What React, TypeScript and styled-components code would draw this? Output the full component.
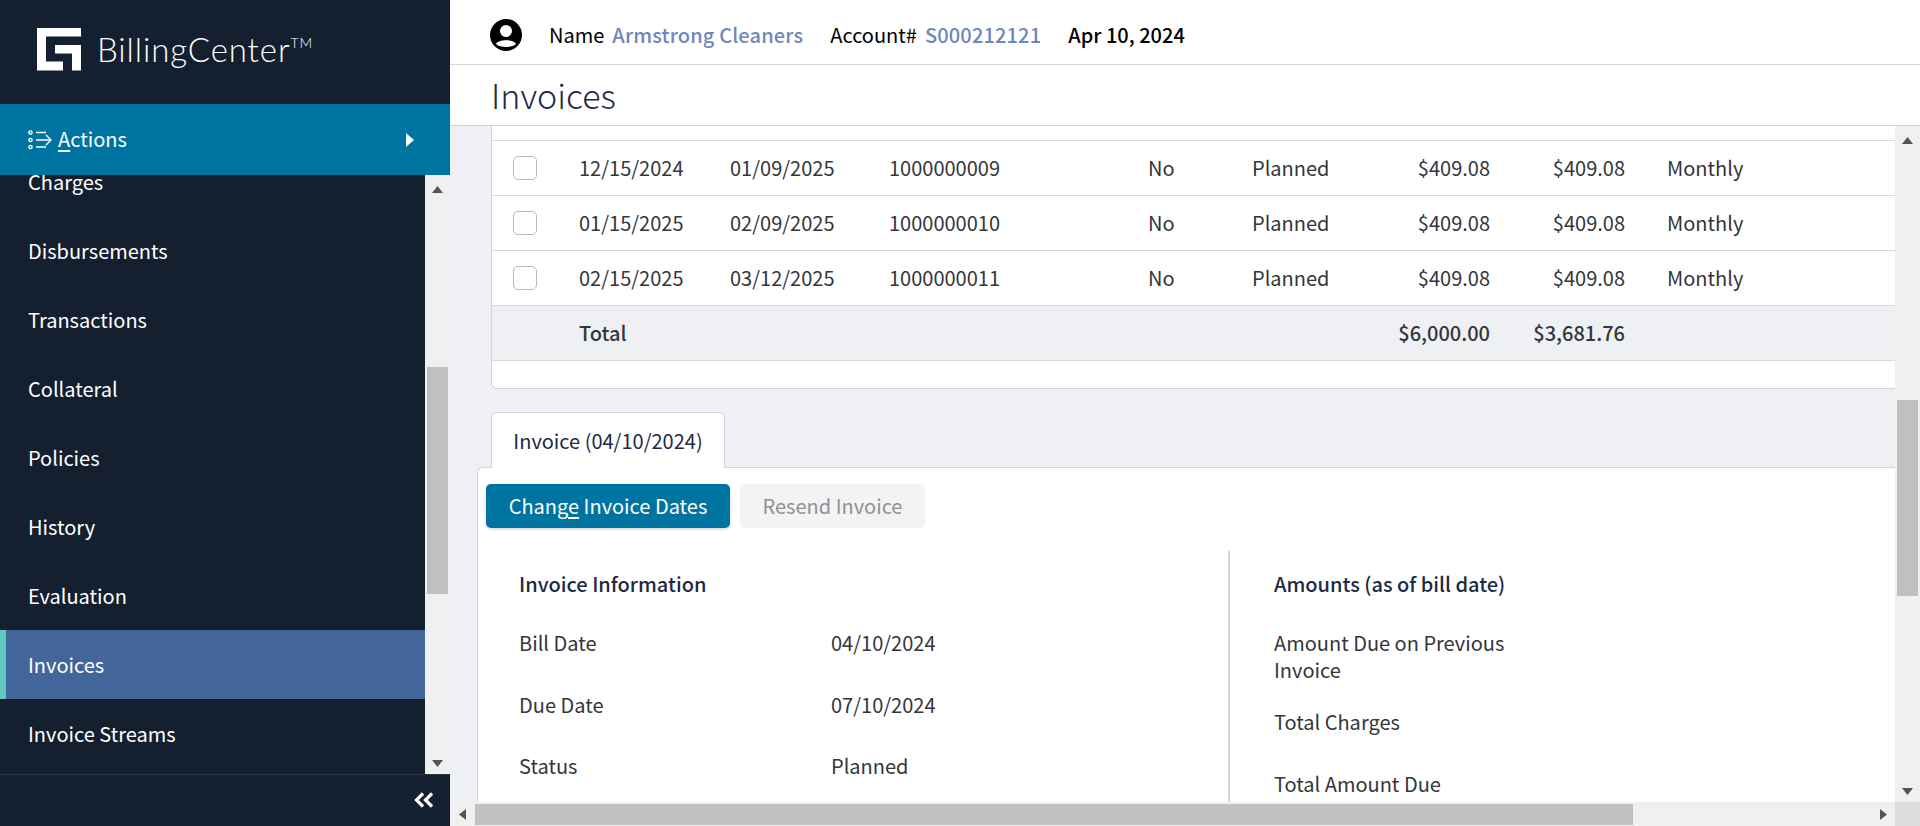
import React from "react";
import styled, { createGlobalStyle } from "styled-components";

const Global = createGlobalStyle`
  html, body { margin: 0; padding: 0; height: 100%; overflow: hidden; }
  body { font-family: "Noto Sans CJK SC", "Noto Sans", sans-serif; font-size: 20px; color: #33363b; background: #eff0f4; }
  #root { height: 826px; }
`;

const Shell = styled.div`display: flex; width: 1920px; height: 826px; overflow: hidden;`;
const Sidebar = styled.aside`width: 450px; height: 826px; flex: none; display: flex; flex-direction: column; background: #141f2f;`;
const Brand = styled.div`height: 104px; flex: none; display: flex; align-items: flex-start; padding: 28px 0 0 37px; box-sizing: border-box; gap: 16px; color: #fff;`;
const BrandName = styled.span`font-family: "Lato", sans-serif; font-weight: 300; font-size: 33px; line-height: 40px; letter-spacing: 0.9px; margin-top: 1px; sup { font-size: 14px; line-height: 0; vertical-align: 14px; }`;
const ActionsBar = styled.div`height: 71px; flex: none; box-sizing: border-box; background: #0074a1; color: #fff; display: flex; align-items: center; padding: 0 36px 0 28px; z-index: 1;`;
const ActionsLabel = styled.span`margin-left: 6px; flex: 1; line-height: 30px; padding-bottom: 2px; u { text-underline-offset: 3px; text-decoration-thickness: 2px; }`;
const NavWrap = styled.div`flex: 1; display: flex; min-height: 0; overflow: hidden;`;
const NavList = styled.div`flex: 1; margin-top: -28px;`;
const NavItem = styled.div<{ $active?: boolean }>`
  height: 69px; display: flex; align-items: center; box-sizing: border-box;
  padding-left: ${p => (p.$active ? 22 : 28)}px; padding-bottom: 1px; color: #fff;
  background: ${p => (p.$active ? "#42659a" : "transparent")};
  border-left: ${p => (p.$active ? "6px solid #5fc9c1" : "none")};
`;
const SideTrack = styled.div`width: 25px; flex: none; background: #f0f0f0; display: flex; flex-direction: column; align-items: center; position: relative;`;
const SideThumb = styled.div`width: 21px; height: 227px; background: #c0c0c0; margin-top: 192px;`;
const ArrowSlot = styled.div<{ $bottom?: boolean }>`position: absolute; left: 7px; ${p => (p.$bottom ? "bottom: 7px" : "top: 10px")}; line-height: 0;`;
const SideFooter = styled.div`height: 52px; flex: none; box-sizing: border-box; border-top: 1px solid #2c3646; display: flex; align-items: center; justify-content: flex-end; padding: 0 16px 2px 0; color: #fff;`;

const Main = styled.main`flex: 1; min-width: 0; display: flex; flex-direction: column;`;
const TopBar = styled.header`height: 65px; flex: none; box-sizing: border-box; background: #fff; border-bottom: 1px solid #d4d4d4; display: flex; align-items: center; padding: 5px 0 0 40px; color: #000;`;
const Avatar = styled.span`width: 32px; height: 32px; display: flex; margin-right: 27px;`;
const MetaLabel = styled.span`margin-right: 8px;`;
const MetaValue = styled.span`color: #6d87bb; font-weight: 500; margin-right: 27px; letter-spacing: 0.15px;`;
const DateText = styled.span`font-weight: 500;`;
const TitleBar = styled.div`height: 61px; flex: none; box-sizing: border-box; background: #fff; border-bottom: 1px solid #d4d4d4; padding-left: 41px; display: flex; align-items: center;`;
const Title = styled.h1`margin: 0; font-size: 34px; font-weight: 300; color: #1d2a44; line-height: 44px;`;
const Body = styled.div`flex: 1; min-height: 0; display: flex;`;
const Content = styled.div`flex: 1; min-width: 0; overflow: hidden; padding-left: 27px; display: flex; flex-direction: column;`;

const TableCard = styled.section`margin-left: 14px; flex: none; height: 263px; box-sizing: border-box; background: #fff; border: 1px solid #d4d5d9; border-top: none; border-right: none; border-radius: 0 0 0 6px; padding-top: 14px;`;
const Row = styled.div<{ $total?: boolean }>`
  height: 55px; box-sizing: border-box; display: grid;
  grid-template-columns: 87px 151px 159px 259px 104px 100px 138px 135px 42px 1fr;
  align-items: center; border-top: 1px solid #d8d9dd;
  background: ${p => (p.$total ? "#eff0f4" : "#fff")};
  font-weight: ${p => (p.$total ? 500 : 400)};
  ${p => p.$total && "border-bottom: 1px solid #d8d9dd; height: 56px;"}
`;
const CheckCell = styled.div`padding-left: 21px;`;
const Check = styled.span`display: block; width: 24px; height: 24px; box-sizing: border-box; border: 1px solid #b8b9bd; border-radius: 5px; background: #fff;`;
const Cell = styled.div<{ $right?: boolean }>`text-align: ${p => (p.$right ? "right" : "left")}; line-height: 30px; white-space: nowrap;`;

const Tab = styled.div`margin: 23px 0 0 14px; width: 234px; height: 56px; box-sizing: border-box; flex: none; background: #fff; border: 1px solid #d4d5d9; border-bottom: none; border-radius: 6px 6px 0 0; display: flex; align-items: center; justify-content: center; color: #1d2a44; z-index: 1; margin-bottom: -1px;`;
const Panel = styled.section`flex: 1; min-height: 0; background: #fff; border: 1px solid #d4d5d9; border-right: none; border-bottom: none; border-radius: 6px 0 0 0; padding: 16px 0 0 8px; box-sizing: border-box; overflow: hidden;`;
const Buttons = styled.div`display: flex; gap: 10px;`;
const Primary = styled.button`width: 244px; height: 44px; border: none; border-radius: 5px; background: #0074a1; color: #fff; font: 400 20px "Noto Sans CJK SC", sans-serif; padding: 0 0 2px; box-shadow: 0 1px 3px rgba(0,0,0,.2); u { text-underline-offset: 3px; }`;
const Disabled = styled.button`width: 185px; height: 44px; border: none; border-radius: 5px; background: #f3f3f4; color: #8f9094; font: 400 20px "Noto Sans CJK SC", sans-serif; padding: 0 0 2px;`;
const Columns = styled.div`display: grid; grid-template-columns: 742px 1fr; margin-top: 23px;`;
const InfoCol = styled.div<{ $divided?: boolean }>`
  padding-left: ${p => (p.$divided ? 44 : 33)}px; height: 260px;
  ${p => p.$divided && "border-left: 2px solid #d4d5d9;"}
`;
const Heading = styled.h2`margin: 0 0 28px; padding-top: 16px; font-size: 20px; line-height: 34px; font-weight: 500; color: #1d2a44;`;
const Field = styled.div<{ $h: number }>`display: grid; grid-template-columns: 312px 1fr; height: ${p => p.$h}px; line-height: 27px;`;
const Label = styled.div`width: 250px;`;

const VBar = styled.div`width: 25px; flex: none; background: #f0f0f0; position: relative; display: flex; justify-content: center;`;
const VThumb = styled.div`width: 21px; height: 196px; background: #c0c0c0; margin-top: 274px;`;
const HBar = styled.div`height: 24px; flex: none; background: #f0f0f0; display: flex; align-items: center;`;
const HThumb = styled.div`width: 1158px; height: 21px; margin-left: 9px; background: #c0c0c0;`;
const HArrow = styled.div<{ $left: number }>`margin-left: ${p => p.$left}px; line-height: 0;`;
const Corner = styled.div`width: 25px; height: 24px; margin-left: auto; background: #dcdcdc;`;

const Tri = ({ dir }: { dir: "up" | "down" | "left" | "right" }) => {
  const pts = { up: "0,7 11,7 5.5,0", down: "0,0 11,0 5.5,7", left: "7,0 7,11 0,5.5", right: "0,0 0,11 7,5.5" }[dir];
  const w = dir === "up" || dir === "down" ? 11 : 7;
  const h = dir === "up" || dir === "down" ? 7 : 11;
  return <svg width={w} height={h} viewBox={`0 0 ${w} ${h}`}><polygon points={pts} fill="#555" /></svg>;
};

const rows = [
  ["12/15/2024", "01/09/2025", "1000000009"],
  ["01/15/2025", "02/09/2025", "1000000010"],
  ["02/15/2025", "03/12/2025", "1000000011"],
];
const nav = ["Charges", "Disbursements", "Transactions", "Collateral", "Policies", "History", "Evaluation", "Invoices", "Invoice Streams"];

export default function App() {
  return (
    <Shell>
      <Global />
      <Sidebar>
        <Brand>
          <svg width="44" height="43" viewBox="0 0 44 43">
            <path fill="#fff" d="M0 0H44V8.5H9V33.5H26V42.5H0Z" />
            <path fill="#fff" d="M18 17H44V42.5H35V25.5H18Z" />
          </svg>
          <BrandName>BillingCenter<sup>TM</sup></BrandName>
        </Brand>
        <ActionsBar>
          <svg width="24" height="20" viewBox="0 0 24 20" fill="none" stroke="#fff" strokeWidth="1.4">
            <circle cx="2.5" cy="2.5" r="1.6" /><circle cx="2.5" cy="10" r="1.6" /><circle cx="2.5" cy="17" r="1.6" />
            <path d="M8 2.5H18M8 10H23M8 17H18M18 5L23 10L18 15" />
          </svg>
          <ActionsLabel><u>A</u>ctions</ActionsLabel>
          <svg width="8" height="14" viewBox="0 0 8 14"><polygon points="0,0 8,7 0,14" fill="#fff" /></svg>
        </ActionsBar>
        <NavWrap>
          <NavList>
            {nav.map(n => <NavItem key={n} $active={n === "Invoices"}>{n}</NavItem>)}
          </NavList>
          <SideTrack>
            <ArrowSlot><Tri dir="up" /></ArrowSlot>
            <SideThumb />
            <ArrowSlot $bottom><Tri dir="down" /></ArrowSlot>
          </SideTrack>
        </NavWrap>
        <SideFooter>
          <svg width="20" height="16" viewBox="0 0 20 16" fill="none" stroke="#fff" strokeWidth="3.2">
            <path d="M9 1.5L2.5 8L9 14.5M18 1.5L11.5 8L18 14.5" />
          </svg>
        </SideFooter>
      </Sidebar>
      <Main>
        <TopBar>
          <Avatar>
            <svg width="32" height="32" viewBox="0 0 32 32">
              <circle cx="16" cy="16" r="16" fill="#000" />
              <circle cx="16" cy="12" r="6" fill="#fff" />
              <path d="M6 25C8 20 24 20 26 25C22 29 10 29 6 25Z" fill="#fff" />
            </svg>
          </Avatar>
          <MetaLabel>Name</MetaLabel><MetaValue>Armstrong Cleaners</MetaValue>
          <MetaLabel>Account#</MetaLabel><MetaValue>S000212121</MetaValue>
          <DateText>Apr 10, 2024</DateText>
        </TopBar>
        <TitleBar><Title>Invoices</Title></TitleBar>
        <Body>
          <Content>
            <TableCard>
              {rows.map(r => (
                <Row key={r[2]}>
                  <CheckCell><Check /></CheckCell>
                  <Cell>{r[0]}</Cell><Cell>{r[1]}</Cell><Cell>{r[2]}</Cell>
                  <Cell>No</Cell><Cell>Planned</Cell>
                  <Cell $right>$409.08</Cell><Cell $right>$409.08</Cell>
                  <Cell />
                  <Cell>Monthly</Cell>
                </Row>
              ))}
              <Row $total>
                <CheckCell />
                <Cell>Total</Cell><Cell /><Cell /><Cell /><Cell />
                <Cell $right>$6,000.00</Cell><Cell $right>$3,681.76</Cell><Cell />
              </Row>
            </TableCard>
            <Tab>Invoice (04/10/2024)</Tab>
            <Panel>
              <Buttons>
                <Primary>Chang<u>e</u> Invoice Dates</Primary>
                <Disabled>Resend Invoice</Disabled>
              </Buttons>
              <Columns>
                <InfoCol>
                  <Heading>Invoice Information</Heading>
                  <Field $h={62}><Label>Bill Date</Label><div>04/10/2024</div></Field>
                  <Field $h={61}><Label>Due Date</Label><div>07/10/2024</div></Field>
                  <Field $h={61}><Label>Status</Label><div>Planned</div></Field>
                </InfoCol>
                <InfoCol $divided>
                  <Heading>Amounts (as of bill date)</Heading>
                  <Field $h={79}><Label>Amount Due on Previous Invoice</Label></Field>
                  <Field $h={62}><Label>Total Charges</Label></Field>
                  <Field $h={62}><Label>Total Amount Due</Label></Field>
                </InfoCol>
              </Columns>
            </Panel>
          </Content>
          <VBar>
            <ArrowSlot><Tri dir="up" /></ArrowSlot>
            <VThumb />
            <ArrowSlot $bottom><Tri dir="down" /></ArrowSlot>
          </VBar>
        </Body>
        <HBar>
          <HArrow $left={9}><Tri dir="left" /></HArrow>
          <HThumb />
          <HArrow $left={247}><Tri dir="right" /></HArrow>
          <Corner />
        </HBar>
      </Main>
    </Shell>
  );
}
